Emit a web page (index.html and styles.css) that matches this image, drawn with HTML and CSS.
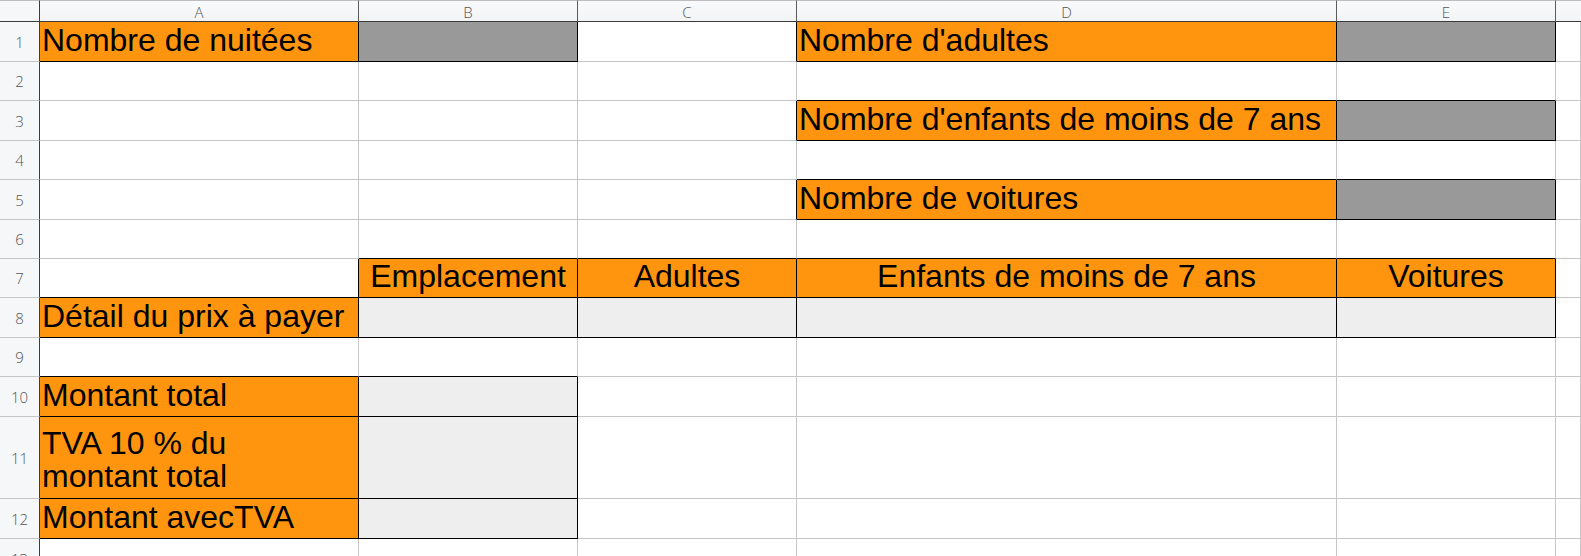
FILE: index.html
```html
<!DOCTYPE html>
<html lang="fr">
<head>
<meta charset="utf-8">
<title>Camping</title>
<link rel="stylesheet" href="styles.css">
</head>
<body>
<div class="sheet">
  <!-- header row -->
  <div class="corner"></div>
  <div class="ch">A</div>
  <div class="ch">B</div>
  <div class="ch">C</div>
  <div class="ch">D</div>
  <div class="ch">E</div>
  <div class="ch ch-last"></div>

  <!-- row 1 -->
  <div class="rh">1</div>
  <div class="c o bx">Nombre de nuitées</div>
  <div class="c g bx"></div>
  <div class="c br"></div>
  <div class="c o bx">Nombre d'adultes</div>
  <div class="c g bx"></div>
  <div class="c"></div>

  <!-- row 2 -->
  <div class="rh">2</div>
  <div class="c"></div>
  <div class="c"></div>
  <div class="c"></div>
  <div class="c bb"></div>
  <div class="c bb"></div>
  <div class="c"></div>

  <!-- row 3 -->
  <div class="rh">3</div>
  <div class="c"></div>
  <div class="c"></div>
  <div class="c br"></div>
  <div class="c o bx">Nombre d'enfants de moins de 7 ans</div>
  <div class="c g bx"></div>
  <div class="c"></div>

  <!-- row 4 -->
  <div class="rh">4</div>
  <div class="c"></div>
  <div class="c"></div>
  <div class="c"></div>
  <div class="c bb"></div>
  <div class="c bb"></div>
  <div class="c"></div>

  <!-- row 5 -->
  <div class="rh">5</div>
  <div class="c"></div>
  <div class="c"></div>
  <div class="c br"></div>
  <div class="c o bx">Nombre de voitures</div>
  <div class="c g bx"></div>
  <div class="c"></div>

  <!-- row 6 -->
  <div class="rh">6</div>
  <div class="c"></div>
  <div class="c bb"></div>
  <div class="c bb"></div>
  <div class="c bb"></div>
  <div class="c bb"></div>
  <div class="c"></div>

  <!-- row 7 -->
  <div class="rh">7</div>
  <div class="c br bb"></div>
  <div class="c o bx ctr">Emplacement</div>
  <div class="c o bx ctr">Adultes</div>
  <div class="c o bx ctr">Enfants de moins de 7 ans</div>
  <div class="c o bx ctr">Voitures</div>
  <div class="c"></div>

  <!-- row 8 -->
  <div class="rh">8</div>
  <div class="c o bx">Détail du prix à payer</div>
  <div class="c l bx"></div>
  <div class="c l bx"></div>
  <div class="c l bx"></div>
  <div class="c l bx"></div>
  <div class="c"></div>

  <!-- row 9 -->
  <div class="rh">9</div>
  <div class="c bb"></div>
  <div class="c bb"></div>
  <div class="c"></div>
  <div class="c"></div>
  <div class="c"></div>
  <div class="c"></div>

  <!-- row 10 -->
  <div class="rh">10</div>
  <div class="c o bx">Montant total</div>
  <div class="c l bx"></div>
  <div class="c"></div>
  <div class="c"></div>
  <div class="c"></div>
  <div class="c"></div>

  <!-- row 11 -->
  <div class="rh">11</div>
  <div class="c o bx wrap">TVA 10 % du<br>montant total</div>
  <div class="c l bx"></div>
  <div class="c"></div>
  <div class="c"></div>
  <div class="c"></div>
  <div class="c"></div>

  <!-- row 12 -->
  <div class="rh">12</div>
  <div class="c o bx">Montant avecTVA</div>
  <div class="c l bx"></div>
  <div class="c"></div>
  <div class="c"></div>
  <div class="c"></div>
  <div class="c"></div>

  <!-- row 13 -->
  <div class="rh">13</div>
  <div class="c"></div>
  <div class="c"></div>
  <div class="c"></div>
  <div class="c"></div>
  <div class="c"></div>
  <div class="c"></div>
</div>
</body>
</html>
```

FILE: styles.css
```css
* {
  box-sizing: border-box;
}

html, body {
  margin: 0;
  padding: 0;
  background: #ffffff;
}

.sheet {
  width: 1581px;
  height: 556px;
  overflow: hidden;
  display: grid;
  grid-template-columns: 40px 319px 219px 219px 540px 219px 1fr;
  grid-template-rows: 22px 40px 39px 40px 39px 40px 39px 39px 40px 39px 40px 82px 40px 40px;
  font-family: "Liberation Sans", Arial, sans-serif;
}

.corner {
  background: #f6f7f8;
  border-top: 1px solid #bdbdbd;
  border-right: 1px solid #3c3c3c;
  border-bottom: 1px solid #3c3c3c;
}

.ch {
  display: flex;
  align-items: center;
  justify-content: center;
  background: linear-gradient(#f9fafb, #f3f4f5);
  border-top: 1px solid #bdbdbd;
  border-right: 1px solid #5c5c5c;
  border-bottom: 1px solid #3c3c3c;
  font-family: "Open Sans", "Noto Sans", sans-serif;
  font-weight: 300;
  font-size: 15px;
  color: #555555;
  padding-top: 1px;
}

.ch-last {
  border-right: none;
}

.rh {
  display: flex;
  align-items: center;
  justify-content: center;
  background: #f6f7f8;
  border-right: 1px solid #3c3c3c;
  border-bottom: 1px solid #c6c6c6;
  font-family: "Open Sans", "Noto Sans", sans-serif;
  font-weight: 300;
  font-size: 15px;
  color: #555555;
}

.c {
  display: flex;
  align-items: flex-end;
  justify-content: flex-start;
  background: #ffffff;
  border-right: 1px solid #c6c6c6;
  border-bottom: 1px solid #c6c6c6;
  padding: 0 2px 5px 2px;
  font-size: 32px;
  line-height: 32px;
  color: #000000;
  white-space: nowrap;
}

.wrap {
  line-height: 33px;
  padding-bottom: 5px;
}

.ctr {
  justify-content: center;
}

.o {
  background: #ff950e;
}

.g {
  background: #999999;
}

.l {
  background: #eeeeee;
}

.bx {
  border-right-color: #000000;
  border-bottom-color: #000000;
}

.br {
  border-right-color: #000000;
}

.bb {
  border-bottom-color: #000000;
}
```
